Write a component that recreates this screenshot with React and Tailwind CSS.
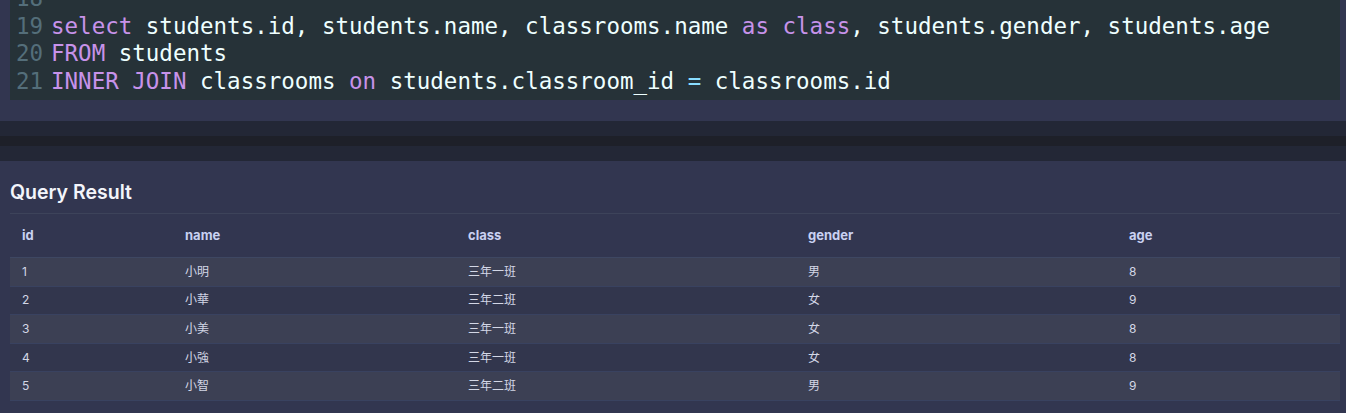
import React from "react";

const code = [
  { n: 18, parts: [] },
  {
    n: 19,
    parts: [
      ["k", "select"],
      ["t", " students.id, students.name, classrooms.name "],
      ["k", "as"],
      ["t", " "],
      ["k", "class"],
      ["t", ", students.gender, students.age"],
    ],
  },
  { n: 20, parts: [["k", "FROM"], ["t", " students"]] },
  {
    n: 21,
    parts: [
      ["k", "INNER JOIN"],
      ["t", " classrooms "],
      ["k", "on"],
      ["t", " students.classroom_id "],
      ["o", "="],
      ["t", " classrooms.id"],
    ],
  },
];

const colors = {
  k: "text-[#c792ea]",
  t: "text-[#eeffff]",
  o: "text-[#89ddff]",
};

const rows = [
  ["1", "小明", "三年一班", "男", "8"],
  ["2", "小華", "三年二班", "女", "9"],
  ["3", "小美", "三年一班", "女", "8"],
  ["4", "小強", "三年一班", "女", "8"],
  ["5", "小智", "三年二班", "男", "9"],
];

const cols = "grid grid-cols-[163px_283px_340px_321px_1fr]";

export default function App() {
  return (
    <div className="h-[413px] w-full overflow-hidden bg-[#323650] font-['Inter','Noto_Sans_CJK_TC',sans-serif]">
      {/* Editor */}
      <div className="pl-[10px] pr-[6px] pb-[21px]">
        <div className="h-[100px] overflow-hidden bg-[#263238] font-['DejaVu_Sans_Mono',monospace] text-[22.5px] leading-[27.5px]">
          <div className="-mt-[15px]">
            {code.map((line) => (
              <div key={line.n} className="flex whitespace-pre">
                <span className="w-[33px] text-right text-[#546e7a]">{line.n}</span>
                <span className="pl-[8px]">
                  {line.parts.map(([c, s], i) => (
                    <span key={i} className={colors[c]}>
                      {s}
                    </span>
                  ))}
                </span>
              </div>
            ))}
          </div>
        </div>
      </div>

      {/* Divider bar */}
      <div className="h-[15px] bg-[#232736]" />
      <div className="h-[10px] bg-[#1e2029]" />
      <div className="h-[15px] bg-[#232736]" />

      {/* Query result */}
      <div className="pl-[10px] pr-[6px] pt-[19px]">
        <h2 className="text-[19.5px] leading-[24px] font-semibold text-[#f3f5fb] mb-[9px]">Query Result</h2>
        <div className="border-t border-[#3d435a]">
          <div className={`${cols} h-[44px] items-center border-b border-[#3e4762] text-[13px] font-bold text-[#c9d1f2]`}>
            <div className="pl-[12px]">id</div>
            <div className="pl-[12px]">name</div>
            <div className="pl-[12px]">class</div>
            <div className="pl-[12px]">gender</div>
            <div className="pl-[12px]">age</div>
          </div>
          {rows.map((r, i) => (
            <div
              key={r[0]}
              className={`${cols} h-[28.6px] items-center border-b border-[#394260] text-[12px] text-[#d3d7e6] ${
                i % 2 === 0 ? "bg-[#3c4054]" : "bg-[#32364d]"
              }`}
            >
              {r.map((v, j) => (
                <div key={j} className="pl-[12px]">
                  {v}
                </div>
              ))}
            </div>
          ))}
        </div>
      </div>
    </div>
  );
}
